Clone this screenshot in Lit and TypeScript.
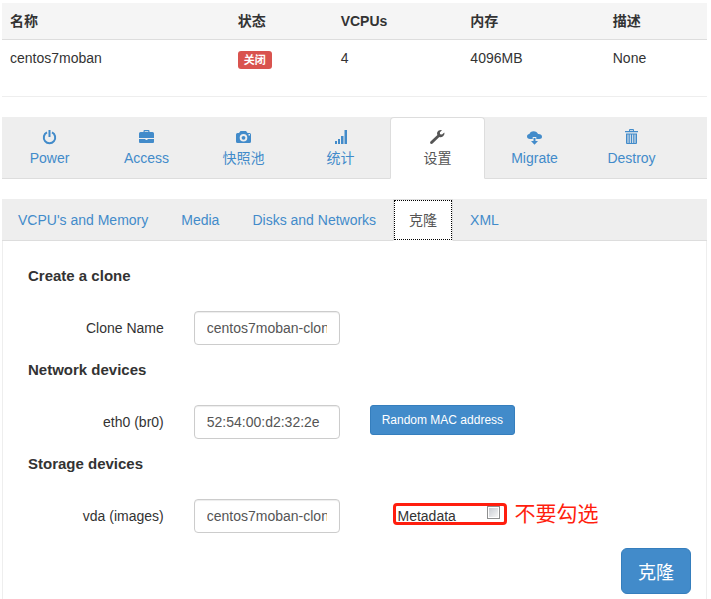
import { LitElement, html, css, svg } from "lit";
import { customElement, state } from "lit/decorators.js";

const icons: Record<string, unknown> = {
  power: svg`<path d="M6 3.400a5.700 5.700 0 1 0 5 0" fill="none" stroke="currentColor" stroke-width="2"/><path d="M7.500 1h2v7h-2z"/>`,
  briefcase: svg`<path fill-rule="evenodd" d="M5.500 3V2q0-1 1-1h4q1 0 1 1v1h3q1.500 0 1.500 1.500V9H1V4.500Q1 3 2.500 3zM6.700 3h3.600v-.8H6.700zM1 10h6.500v1h2v-1H16v3q0 1-1 1H2q-1 0-1-1z"/>`,
  camera: svg`<path fill-rule="evenodd" d="M1 5.500Q1 4 2.500 4H4l1.500-2H11l1.500 2h2Q16 4 16 5.500v7q0 1.500-1.500 1.500h-12Q1 14 1 12.500zM8.500 5a3.800 3.800 0 1 0 0 7.600A3.800 3.800 0 0 0 8.500 5zM13.500 5v1.500H15V5z"/><circle cx="8.500" cy="8.800" r="1.900"/>`,
  signal: svg`<path d="M3 12h2v3H3zM6 10h2v5H6zM9 7h2.500v8H9zM12.500 1H15v14h-2.500z"/>`,
  wrench: svg`<path d="M15.300 3.500 13 5.600 11.100 5.200 10.800 3.400 13 1.100C11 .6 9.100 1.400 8.400 3c-.5 1.100-.4 2.100 0 3.100L1.500 12.500c-.8.8-.4 2.500 1 2.500.4 0 .8-.2 1.100-.5L10.300 8c1.200.4 2.700.2 3.800-.8 1.200-1 1.600-2.500 1.200-3.700z"/>`,
  cloud: svg`<path d="M4 10C2 10 1 8.900 1 7.500c0-1.300 1-2.300 2.400-2.500C3.800 3.400 5.500 2.200 7.500 2.200c2.300 0 4 1.200 4.500 2.900 2.300-.2 4 .9 4 2.600 0 1.300-1 2.300-2.700 2.300h-3V8H6.700v2z"/><path d="M7.500 9h2v3H12l-3.500 3.800L5 12h2.500z"/>`,
  trash: svg`<path fill-rule="evenodd" d="M6 2V1q0-1 1-1h3q1 0 1 1v1h4v1.300H2V2zM7 2h3v-.8H7zM3 4.500h11V14q0 1-1 1H4q-1 0-1-1zM4.500 5.500V14h1V5.500zM6.800 5.500V14h1V5.500zM9.200 5.500V14h1V5.500zM11.500 5.500V14h1V5.500z"/>`,
};

const actions = [
  ["power", "Power"],
  ["briefcase", "Access"],
  ["camera", "快照池"],
  ["signal", "统计"],
  ["wrench", "设置"],
  ["cloud", "Migrate"],
  ["trash", "Destroy"],
];

const sections = ["VCPU's and Memory", "Media", "Disks and Networks", "克隆", "XML"];

@customElement("app-root")
export class AppRoot extends LitElement {
  @state() private action = 4;
  @state() private section = 3;

  static styles = css`
    :host {
      display: flex;
      flex-direction: column;
      box-sizing: border-box;
      min-height: 100vh;
      padding: 3px 4px 0 2px;
      background: #fff;
      color: #333;
      font: 14px/20px "Liberation Sans", Arial, "Noto Sans CJK SC", sans-serif;
    }
    * { box-sizing: border-box; }
    .summary {
      width: 100%;
      table-layout: fixed;
      border-collapse: separate;
      border-spacing: 0;
    }
    .summary th, .summary td { padding: 8px; text-align: left; vertical-align: top; }
    .summary th { background: #f5f5f5; border-bottom: 1px solid #ddd; font-weight: bold; }
    .name { width: 32.3%; }
    .status { width: 14.6%; }
    .cpus { width: 18.4%; }
    .memory { width: 20.2%; }
    .badge {
      display: inline-block;
      margin-top: 3px;
      padding: 0 6px;
      border-radius: 3px;
      background: #d9534f;
      color: #fff;
      font-size: 11px;
      font-weight: bold;
      line-height: 18px;
      vertical-align: top;
    }
    .rule { width: 100%; margin: 19px 0 20px; border: 0; border-top: 1px solid #eee; }
    .tabs {
      display: flex;
      gap: 1px;
      background: #eee;
      border-bottom: 1px solid #ddd;
    }
    .tab {
      display: block;
      margin-bottom: -1px;
      padding: 10px 15px;
      border: 1px solid transparent;
      border-radius: 4px 4px 0 0;
      color: #428bca;
      text-align: center;
      text-decoration: none;
      white-space: nowrap;
    }
    .tab.active { background: #fff; border-color: #ddd #ddd #fff; color: #555; }
    .main { gap: 2px; }
    .main .tab { width: 95px; }
    .sub { margin-top: 20px; }
    .sub .tab.active { outline: 1px dotted #000; outline-offset: -2px; border-radius: 0; }
    .icon { display: block; width: 17px; height: 16px; margin: 1px auto 3px; fill: currentColor; }
    .panel {
      flex: 1;
      padding: 25px 15px 5px;
      border: solid #eee;
      border-width: 0 1px;
    }
    .heading { margin: 0 10px 25px; font-size: 15px; line-height: 20px; font-weight: bold; }
    .row {
      display: grid;
      grid-template-columns: repeat(4, 1fr);
      column-gap: 30px;
      align-items: start;
      margin-bottom: 15px;
    }
    .label { padding-top: 7px; text-align: right; }
    .field {
      width: 100%;
      height: 34px;
      padding: 6px 12px;
      border: 1px solid #ccc;
      border-radius: 4px;
      background: #fff;
      box-shadow: inset 0 1px 1px rgba(0, 0, 0, 0.075);
      color: #555;
      font: inherit;
    }
    .button {
      border: 1px solid #357ebd;
      background: #428bca;
      color: #fff;
      font-family: inherit;
      white-space: nowrap;
    }
    .small { height: 30px; padding: 0 10px; border-radius: 3px; font-size: 12px; }
    .large { height: 46px; padding: 0 16px; border-radius: 6px; font-size: 18px; }
    .extra { grid-column: span 2; display: flex; gap: 8px; padding: 4px 0 0 23px; }
    .marked {
      display: flex;
      justify-content: space-between;
      width: 114px;
      height: 22px;
      padding: 0 4px 0 2px;
      border: 3px solid #ff1e0e;
      border-radius: 4px;
    }
    .check {
      appearance: none;
      width: 13px;
      height: 13px;
      margin: 0;
      border: 1px solid #8e8f8f;
      background: linear-gradient(135deg, #c8ccd2, #f6f6f6) content-box;
      padding: 1px;
    }
    .note { color: #ff1e0e; font-size: 21px; line-height: 22px; white-space: nowrap; }
    .footer { display: flex; justify-content: flex-end; }
  `;

  private pick(event: Event, key: "action" | "section", index: number) {
    event.preventDefault();
    this[key] = index;
  }

  render() {
    return html`
      <table class="summary">
        <thead>
          <tr>
            <th class="name">名称</th>
            <th class="status">状态</th>
            <th class="cpus">VCPUs</th>
            <th class="memory">内存</th>
            <th>描述</th>
          </tr>
        </thead>
        <tbody>
          <tr>
            <td>centos7moban</td>
            <td><span class="badge">关闭</span></td>
            <td>4</td>
            <td>4096MB</td>
            <td>None</td>
          </tr>
        </tbody>
      </table>
      <hr class="rule" />
      <nav class="tabs main">
        ${actions.map(
          ([icon, text], i) => html`<a
            href="#"
            class="tab ${i === this.action ? "active" : ""}"
            @click=${(e: Event) => this.pick(e, "action", i)}
            ><svg class="icon" viewBox="0 0 17 16" aria-hidden="true">${icons[icon]}</svg>${text}</a
          >`
        )}
      </nav>
      <nav class="tabs sub">
        ${sections.map(
          (text, i) => html`<a
            href="#"
            class="tab ${i === this.section ? "active" : ""}"
            @click=${(e: Event) => this.pick(e, "section", i)}
            >${text}</a
          >`
        )}
      </nav>
      <form class="panel" @submit=${(e: Event) => e.preventDefault()}>
        <h3 class="heading">Create a clone</h3>
        <div class="row">
          <label class="label" for="clone">Clone Name</label>
          <input class="field" id="clone" type="text" value="centos7moban-clone" />
        </div>
        <h3 class="heading">Network devices</h3>
        <div class="row">
          <label class="label" for="mac">eth0 (br0)</label>
          <input class="field" id="mac" type="text" value="52:54:00:d2:32:2e" />
          <button class="button small" type="button">Random MAC address</button>
        </div>
        <h3 class="heading">Storage devices</h3>
        <div class="row">
          <label class="label" for="disk">vda (images)</label>
          <input class="field" id="disk" type="text" value="centos7moban-clone.img" />
          <div class="extra">
            <div class="marked">
              <label for="meta">Metadata</label>
              <input class="check" id="meta" type="checkbox" />
            </div>
            <span class="note">不要勾选</span>
          </div>
        </div>
        <div class="footer"><button class="button large" type="submit">克隆</button></div>
      </form>
    `;
  }
}
